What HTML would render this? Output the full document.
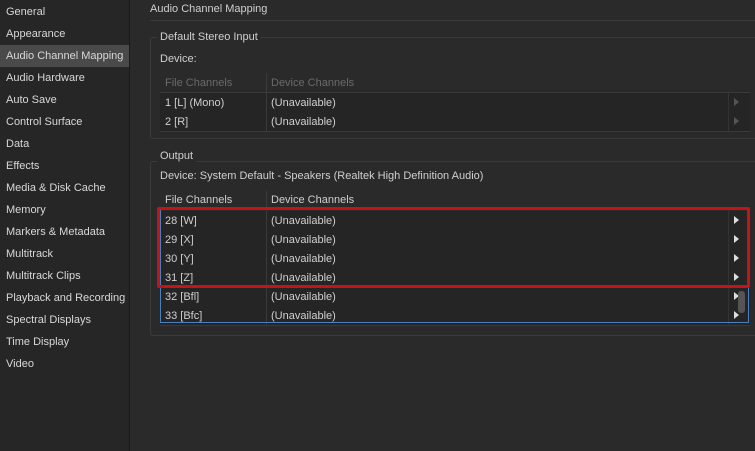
<!DOCTYPE html>
<html><head><style>
body{margin:0;width:755px;height:450px;background:#2a2a2a;font-family:"Liberation Sans",sans-serif;font-size:11px;color:#cfcfcf;position:relative;overflow:hidden}
.sb{position:absolute;left:0;top:0;width:129px;height:450px;background:#262626;border-right:1px solid #1a1a1a;padding-top:1px}
.sb div{height:22px;line-height:22px;padding-left:6px;color:#d8d8d8}
.sb .sel{background:#4a4a4a}
.a{position:absolute;white-space:nowrap}
.grp{position:absolute;border:1px solid #3a3a3a;border-radius:2px}
.row{position:absolute;left:160px;width:590px;height:19px;line-height:20px;border-bottom:1px solid #3a3a3a;background:#252525}
.row span{position:absolute}
.row .c1{left:5px}.row .c2{left:111px}
.row .d{position:absolute;left:106px;top:0;width:1px;height:19px;background:#3a3a3a}
.row .ar{position:absolute;left:568px;top:0;width:1px;height:19px;background:#333}
.tri{position:absolute;left:574px;top:5px;width:0;height:0;border-left:5px solid #ddd;border-top:4px solid transparent;border-bottom:4px solid transparent}
</style></head><body>
<div class="sb">
<div>General</div><div>Appearance</div><div class="sel">Audio Channel Mapping</div><div>Audio Hardware</div><div>Auto Save</div><div>Control Surface</div><div>Data</div><div>Effects</div><div>Media &amp; Disk Cache</div><div>Memory</div><div>Markers &amp; Metadata</div><div>Multitrack</div><div>Multitrack Clips</div><div>Playback and Recording</div><div>Spectral Displays</div><div>Time Display</div><div>Video</div>
</div>
<div class="a" style="left:150px;top:3px">Audio Channel Mapping</div>
<div class="a" style="left:150px;top:20px;width:605px;height:1px;background:#3a3a3a"></div>
<div class="grp" style="left:150px;top:37px;width:610px;height:100px"></div>
<div class="a" style="left:157px;top:31px;background:#2a2a2a;padding:0 3px">Default Stereo Input</div>
<div class="a" style="left:160px;top:53px">Device:</div>
<div class="a" style="left:165px;top:77px;color:#6a6a6a">File Channels</div>
<div class="a" style="left:271px;top:77px;color:#6a6a6a">Device Channels</div>
<div class="a" style="left:266px;top:73px;width:1px;height:19px;background:#3a3a3a"></div>
<div class="a" style="left:160px;top:92px;width:590px;height:1px;background:#3a3a3a"></div>
<div class="row" style="top:93px"><span class="c1">1 [L] (Mono)</span><div class="d"></div><span class="c2">(Unavailable)</span><div class="ar"></div><div class="tri" style="border-left-color:#555"></div></div>
<div class="row" style="top:112px"><span class="c1">2 [R]</span><div class="d"></div><span class="c2">(Unavailable)</span><div class="ar"></div><div class="tri" style="border-left-color:#555"></div></div>
<div class="grp" style="left:150px;top:161px;width:610px;height:173px"></div>
<div class="a" style="left:157px;top:150px;background:#2a2a2a;padding:0 3px">Output</div>
<div class="a" style="left:160px;top:170px">Device: System Default - Speakers (Realtek High Definition Audio)</div>
<div class="a" style="left:165px;top:194px">File Channels</div>
<div class="a" style="left:271px;top:194px">Device Channels</div>
<div class="a" style="left:266px;top:191px;width:1px;height:19px;background:#3a3a3a"></div>
<div class="row" style="top:211px"><span class="c1">28 [W]</span><div class="d"></div><span class="c2">(Unavailable)</span><div class="ar"></div><div class="tri"></div></div>
<div class="row" style="top:230px"><span class="c1">29 [X]</span><div class="d"></div><span class="c2">(Unavailable)</span><div class="ar"></div><div class="tri"></div></div>
<div class="row" style="top:249px"><span class="c1">30 [Y]</span><div class="d"></div><span class="c2">(Unavailable)</span><div class="ar"></div><div class="tri"></div></div>
<div class="row" style="top:268px"><span class="c1">31 [Z]</span><div class="d"></div><span class="c2">(Unavailable)</span><div class="ar"></div><div class="tri"></div></div>
<div class="row" style="top:287px"><span class="c1">32 [Bfl]</span><div class="d"></div><span class="c2">(Unavailable)</span><div class="ar"></div><div class="tri"></div></div>
<div class="row" style="top:306px"><span class="c1">33 [Bfc]</span><div class="d"></div><span class="c2">(Unavailable)</span><div class="ar"></div><div class="tri"></div></div>
<div class="a" style="left:160px;top:208px;width:587px;height:114px;border:1px solid #4a7fc0;border-top:none"></div>
<div class="a" style="left:738px;top:291px;width:7px;height:22px;background:#555;border-radius:3px"></div>
<div class="a" style="left:157px;top:207px;width:587px;height:75px;border:3px solid #c4141a;border-radius:2px"></div>
</body></html>
